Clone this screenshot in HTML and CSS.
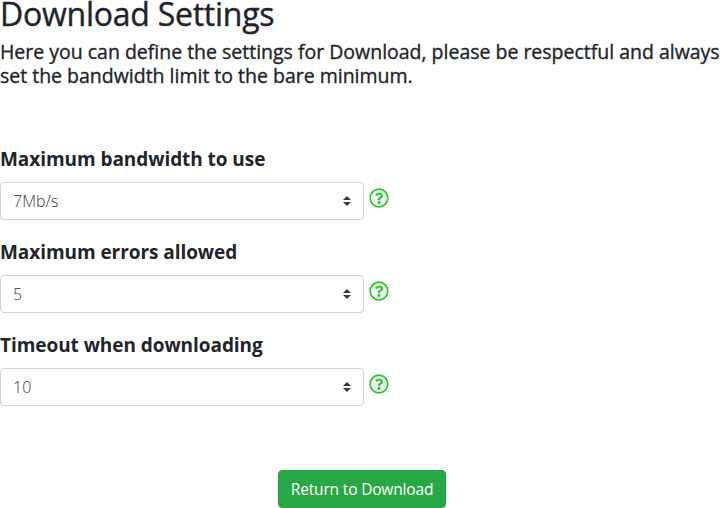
FILE: index.html
```html
<!DOCTYPE html>
<html lang="en">
<head>
<meta charset="utf-8">
<title>Download Settings</title>
<link rel="stylesheet" href="styles.css">
</head>
<body>
<svg class="defs" aria-hidden="true">
  <symbol id="help" viewBox="0 0 512 512"><path d="M256 8C119 8 8 119 8 256s111 248 248 248 248-111 248-248S393 8 256 8zm0 448c-110.500 0-200-89.400-200-200 0-110.500 89.500-200 200-200 110.500 0 200 89.500 200 200 0 110.500-89.400 200-200 200zm107.200-255.200c0 67.100-72.400 68.100-72.400 92.900V300c0 6.600-5.400 12-12 12h-45.600c-6.600 0-12-5.400-12-12v-8.700c0-35.700 27.100-50 47.600-61.500 17.600-9.800 28.300-16.500 28.300-29.500 0-17.200-22-28.700-39.800-28.700-23.200 0-33.900 11-48.900 30-4.100 5.100-11.500 6.100-16.700 2.100l-27.800-21.100c-5.100-3.900-6.300-11.100-2.600-16.400C184.800 131.500 214.900 112 261.800 112c49.100 0 101.500 38.300 101.500 88.800zM298 368c0 23.200-18.800 42-42 42s-42-18.800-42-42 18.800-42 42-42 42 18.800 42 42z"/></symbol>
  <symbol id="sort" viewBox="0 0 4 5"><path d="M2 0L0 2h4zm0 5L0 3h4z"/></symbol>
</svg>
<main>
  <h1>Download Settings</h1>
  <p class="intro">Here you can define the settings for Download, please be respectful and always<br>set the bandwidth limit to the bare minimum.</p>
  <form>
    <section class="field">
      <h2>Maximum bandwidth to use</h2>
      <div class="row"><div class="select"><span>7Mb/s</span><svg class="caret"><use href="#sort"/></svg></div><svg class="help"><use href="#help"/></svg></div>
    </section>
    <section class="field">
      <h2>Maximum errors allowed</h2>
      <div class="row"><div class="select"><span>5</span><svg class="caret"><use href="#sort"/></svg></div><svg class="help"><use href="#help"/></svg></div>
    </section>
    <section class="field">
      <h2>Timeout when downloading</h2>
      <div class="row"><div class="select"><span>10</span><svg class="caret"><use href="#sort"/></svg></div><svg class="help"><use href="#help"/></svg></div>
    </section>
    <button type="button">Return to Download</button>
  </form>
</main>
</body>
</html>
```
FILE: styles.css
```css
* { box-sizing: border-box; }
body { margin: 0; background: #fff; color: #212529; font-family: "Open Sans", "Noto Sans", sans-serif; overflow: hidden; }
.defs { display: none; }
h1 { margin: 0; height: 40px; font-size: 32px; line-height: 28px; font-weight: 400; letter-spacing: -0.25px; white-space: nowrap; -webkit-text-stroke: 0.4px #212529; }
.intro { margin: 0; height: 107px; font-size: 19.5px; line-height: 24px; font-weight: 400; letter-spacing: -0.01px; white-space: nowrap; -webkit-text-stroke: 0.35px #212529; }
h2 { margin: 0; height: 35px; font-size: 19px; line-height: 24px; font-weight: 700; letter-spacing: -0.06px; white-space: nowrap; }
.field { height: 93px; }
.row { display: flex; gap: 5px; }
.select { display: flex; align-items: center; justify-content: space-between; width: 364px; height: 38px; padding: 0 12px; border: 1px solid #ced4da; border-radius: 4px; color: #343a40; font-size: 16px; font-weight: 300; }
.caret { width: 8px; height: 10px; fill: #343a40; }
.help { width: 20px; height: 20px; margin-top: 5.5px; fill: #32cd32; }
button { display: block; margin: 44px 0 0 278px; width: 168px; height: 38px; padding: 0; border: 1px solid #28a745; border-radius: 4px; background: #28a745; color: #fff; font: 400 15.5px/24px "Open Sans", sans-serif; letter-spacing: -0.17px; white-space: nowrap; }
```
